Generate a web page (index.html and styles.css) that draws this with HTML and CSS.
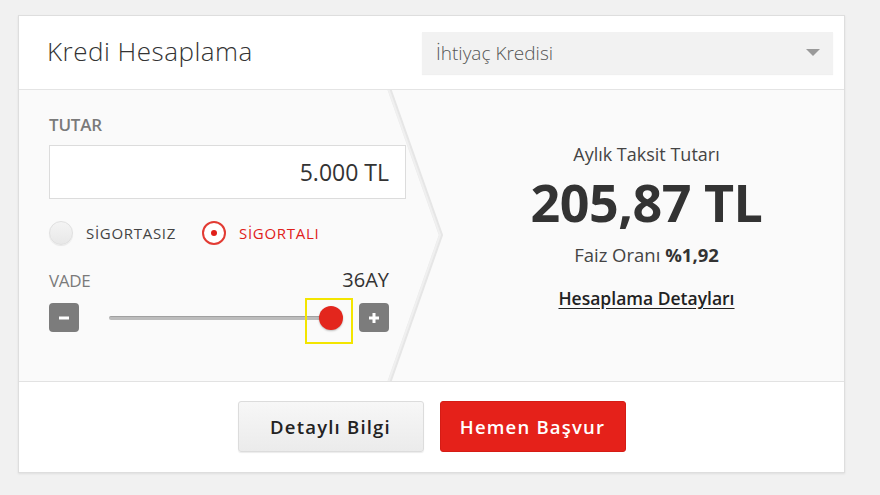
FILE: index.html
```html
<!DOCTYPE html>
<html lang="tr">
<head>
<meta charset="utf-8">
<title>Kredi Hesaplama</title>
<link rel="stylesheet" href="styles.css">
</head>
<body>
<div class="card">
  <div class="card-head">
    <h1 class="title">Kredi Hesaplama</h1>
    <div class="select">
      <span class="select-text">İhtiyaç Kredisi</span>
      <span class="select-caret"></span>
    </div>
  </div>
  <div class="card-body">
    <svg class="divider" viewBox="0 0 824 291" width="824" height="291">
      <polyline points="370,-2 422,145 370,293" fill="none" stroke="#e6e6e6" stroke-width="4"/>
      <polyline points="369,-2 421,145 369,293" fill="none" stroke="#f0f0f0" stroke-width="2"/>
    </svg>
    <div class="calc">
      <div class="label">TUTAR</div>
      <div class="amount">5.000 TL</div>
      <div class="radios">
        <div class="radio"><span class="radio-dot"></span><span class="radio-text">SİGORTASIZ</span></div>
        <div class="radio radio-on"><span class="radio-dot"></span><span class="radio-text">SİGORTALI</span></div>
      </div>
      <div class="vade-row">
        <span class="label label-vade">VADE</span>
        <span class="vade-value">36AY</span>
      </div>
      <div class="slider">
        <span class="step">
          <svg width="12" height="12" viewBox="0 0 12 12"><rect x="1" y="4.5" width="10" height="3" fill="#fff"/></svg>
        </span>
        <div class="track">
          <div class="track-line"></div>
          <span class="thumb"></span>
          <span class="focus-box"></span>
        </div>
        <span class="step">
          <svg width="12" height="12" viewBox="0 0 12 12"><rect x="1" y="4.5" width="10" height="3" fill="#fff"/><rect x="4.5" y="1" width="3" height="10" fill="#fff"/></svg>
        </span>
      </div>
    </div>
    <div class="result">
      <div class="result-label">Aylık Taksit Tutarı</div>
      <div class="result-value">205,87 TL</div>
      <div class="result-rate">Faiz Oranı <b>%1,92</b></div>
      <a class="result-link" href="#">Hesaplama Detayları</a>
    </div>
  </div>
  <div class="card-foot">
    <a class="btn btn-light" href="#">Detaylı Bilgi</a>
    <a class="btn btn-red" href="#">Hemen Başvur</a>
  </div>
</div>
</body>
</html>
```

FILE: styles.css
```css
* { box-sizing: border-box; }
html, body { margin: 0; padding: 0; }
body {
  background: #f1f1f1;
  font-family: "Open Sans", "Liberation Sans", sans-serif;
  color: #333;
  width: 880px;
  height: 495px;
  overflow: hidden;
}
.card {
  margin: 15px 0 0 18px;
  width: 827px;
  background: #fff;
  border: 1px solid #dedede;
  box-shadow: 0 1px 2px rgba(0,0,0,0.08);
}
.card-head {
  height: 74px;
  display: flex;
  align-items: center;
  justify-content: space-between;
  padding: 0 11px 0 28px;
  border-bottom: 1px solid #e4e4e4;
}
.title {
  margin: 0;
  font-weight: 300;
  font-size: 26px;
  letter-spacing: 0.5px;
  color: #333;
  padding-bottom: 4px;
}
.select {
  width: 411px;
  height: 42px;
  background: #f2f2f2;
  box-shadow: 0 1px 1px rgba(0,0,0,0.06);
  display: flex;
  align-items: center;
  justify-content: space-between;
  padding: 0 13px 0 14px;
}
.select-text {
  font-size: 19px;
  font-weight: 300;
  color: #555;
}
.select-caret {
  width: 0; height: 0;
  border-left: 7px solid transparent;
  border-right: 7px solid transparent;
  border-top: 7px solid #9a9a9a;
}
.card-body {
  position: relative;
  height: 292px;
  background: #fafafa;
  display: flex;
  border-bottom: 1px solid #e2e2e2;
}
.divider {
  position: absolute;
  left: 0; top: 0;
  pointer-events: none;
}
.calc {
  width: 430px;
  padding: 25px 0 0 30px;
  position: relative;
}
.label {
  font-size: 17px;
  font-weight: 600;
  color: #7a7a7a;
  line-height: 20px;
  letter-spacing: -0.2px;
}
.amount {
  margin-top: 10px;
  width: 357px;
  height: 54px;
  background: #fff;
  border: 1px solid #dcdcdc;
  display: flex;
  align-items: center;
  justify-content: flex-end;
  padding-right: 16px;
  font-size: 23px;
  color: #333;
  font-weight: 500;
}
.radios {
  display: flex;
  align-items: center;
  margin-top: 22px;
  height: 24px;
}
.radio {
  display: flex;
  align-items: center;
  margin-right: 26px;
}
.radio-dot {
  width: 24px; height: 24px;
  border-radius: 50%;
  background: linear-gradient(#f4f4f4, #e8e8e8);
  border: 1px solid #e0e0e0;
  box-shadow: 0 1px 1px rgba(0,0,0,0.08);
  margin-right: 13px;
  position: relative;
}
.radio-text {
  font-size: 15px;
  letter-spacing: 0.7px;
  color: #444;
}
.radio-on .radio-dot {
  background: #fff;
  border: 2px solid #e23b33;
  box-shadow: none;
}
.radio-on .radio-dot::after {
  content: "";
  position: absolute;
  left: 50%; top: 50%;
  width: 6px; height: 6px;
  margin: -3px 0 0 -3px;
  border-radius: 50%;
  background: #e0201a;
}
.radio-on .radio-text { color: #e0201a; }
.vade-row {
  width: 340px;
  margin-top: 24px;
  display: flex;
  justify-content: space-between;
  align-items: flex-end;
}
.label-vade {
  font-weight: 400;
  color: #7a7a7a;
  letter-spacing: -0.3px;
}
.vade-value {
  font-size: 20px;
  color: #333;
  font-weight: 500;
  line-height: 22px;
}
.slider {
  width: 340px;
  margin-top: 12px;
  display: flex;
  align-items: center;
}
.step {
  width: 30px; height: 29px;
  border-radius: 4px;
  background: #7c7c7c;
  display: flex;
  align-items: center;
  justify-content: center;
}
.track {
  position: relative;
  flex: 1;
  height: 29px;
  margin: 0 16px 0 30px;
}
.track-line {
  position: absolute;
  left: 0; top: 13px;
  width: 222px;
  height: 4px;
  border-radius: 2px;
  background: #bcbcbc;
  border-top: 1px solid #a0a0a0;
}
.thumb {
  position: absolute;
  right: 0; top: 3px;
  width: 24px; height: 24px;
  border-radius: 50%;
  background: #e3261d;
  box-shadow: 0 1px 2px rgba(0,0,0,0.25);
}
.focus-box {
  position: absolute;
  right: -10px; top: -5px;
  width: 48px; height: 46px;
  border: 2px solid #f3e500;
}
.result {
  flex: 1;
  padding: 51px 0 0 0;
  display: flex;
  flex-direction: column;
  align-items: center;
}
.result-label {
  font-size: 18px;
  color: #444;
  line-height: 26px;
}
.result-value {
  font-size: 52px;
  font-weight: 700;
  color: #333;
  line-height: 60px;
  margin-top: 5px;
  letter-spacing: -0.5px;
}
.result-rate {
  font-size: 18.5px;
  color: #444;
  line-height: 26px;
  margin-top: 10px;
}
.result-rate b { color: #333; }
.result-link {
  margin-top: 17px;
  font-size: 17.5px;
  font-weight: 600;
  color: #222;
  line-height: 26px;
  text-decoration: underline;
  text-underline-offset: 3px;
}
.card-foot {
  height: 90px;
  display: flex;
  justify-content: center;
  align-items: center;
  gap: 16px;
  padding-bottom: 1px;
}
.btn {
  width: 186px;
  height: 51px;
  border-radius: 3px;
  display: flex;
  align-items: center;
  justify-content: center;
  font-size: 18.5px;
  font-weight: 600;
  letter-spacing: 1.2px;
  text-decoration: none;
}
.btn-light {
  background: linear-gradient(#f7f7f7, #ebebeb);
  border: 1px solid #dcdcdc;
  color: #222;
  box-shadow: 0 1px 1px rgba(0,0,0,0.08);
}
.btn-red {
  background: #e5211a;
  color: #fff;
  border: 1px solid #d51c15;
}
```
